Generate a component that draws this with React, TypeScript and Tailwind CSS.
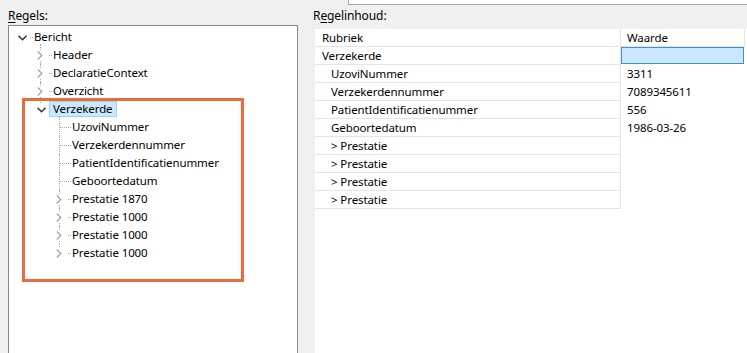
import React from "react";

type Kind = "open" | "closed" | "leaf";

interface TreeRow {
  label: string;
  level: number;
  kind: Kind;
  first?: boolean;
  last?: boolean;
  selected?: boolean;
}

const treeRows: TreeRow[] = [
  { label: "Bericht", level: 0, kind: "open", last: true },
  { label: "Header", level: 1, kind: "closed", first: true },
  { label: "DeclaratieContext", level: 1, kind: "closed" },
  { label: "Overzicht", level: 1, kind: "closed" },
  { label: "Verzekerde", level: 1, kind: "open", last: true, selected: true },
  { label: "UzoviNummer", level: 2, kind: "leaf", first: true },
  { label: "Verzekerdennummer", level: 2, kind: "leaf" },
  { label: "PatientIdentificatienummer", level: 2, kind: "leaf" },
  { label: "Geboortedatum", level: 2, kind: "leaf" },
  { label: "Prestatie 1870", level: 2, kind: "closed" },
  { label: "Prestatie 1000", level: 2, kind: "closed" },
  { label: "Prestatie 1000", level: 2, kind: "closed" },
  { label: "Prestatie 1000", level: 2, kind: "closed", last: true },
];

const indent = ["pl-[4px]", "pl-[23px]", "pl-[42px]"];

const tableRows = [
  { label: "Verzekerde", sub: false, value: "", selected: true },
  { label: "UzoviNummer", sub: true, value: "3311" },
  { label: "Verzekerdennummer", sub: true, value: "7089345611" },
  { label: "PatientIdentificatienummer", sub: true, value: "556" },
  { label: "Geboortedatum", sub: true, value: "1986-03-26" },
  { label: "> Prestatie", sub: true, value: "" },
  { label: "> Prestatie", sub: true, value: "" },
  { label: "> Prestatie", sub: true, value: "" },
  { label: "> Prestatie", sub: true, value: "" },
];

const Chevron = ({ open }: { open: boolean }) =>
  open ? (
    <svg width="9" height="6" viewBox="0 0 9 6">
      <path d="M0.5 0.8 L4.5 4.8 L8.5 0.8" fill="none" stroke="#2b2b2b" strokeWidth="1.3" />
    </svg>
  ) : (
    <svg width="6" height="9" viewBox="0 0 6 9">
      <path d="M0.8 0.5 L4.8 4.5 L0.8 8.5" fill="none" stroke="#a6a6a6" strokeWidth="1.3" />
    </svg>
  );

const Connector = ({ row }: { row: TreeRow }) => {
  const root = row.level === 0;
  return (
    <div className="relative w-[17px] h-[18px] shrink-0">
      {!root && (
        <div
          className={`absolute left-[8px] w-0 border-l border-dotted border-[#a8a8a8] ${
            row.first ? "-top-[2px]" : "top-0"
          } ${row.last ? "h-[9px]" : "bottom-0"}`}
        />
      )}
      <div className="absolute left-[9px] top-[9px] w-[11px] h-0 border-t border-dotted border-[#a8a8a8]" />
      {row.kind !== "leaf" && (
        <div className="absolute left-[1px] top-[4px] w-[15px] h-[11px] bg-white flex items-center justify-start pl-[4px]">
          <Chevron open={row.kind === "open"} />
        </div>
      )}
    </div>
  );
};

export default function App() {
  return (
    <div
      className="w-[747px] h-[353px] bg-[#f0f0f0] overflow-hidden relative text-[11.5px] tracking-[-0.1px] text-black"
      style={{ fontFamily: '"Noto Sans", "Segoe UI", sans-serif' }}
    >
      {/* partially visible input above */}
      <div className="ml-[348px] h-[5px] bg-white border-l border-b border-[#a9a9a9]" />

      <div className="flex">
        {/* left: Regels */}
        <div className="ml-[8px] w-[290px] shrink-0">
          <div className="h-[20px] pt-[3px] leading-[16px] text-[12px]">
            <span className="underline underline-offset-2">R</span>egels:
          </div>
          <div className="h-[340px] bg-white border border-[#828790] pt-[2px]">
            {treeRows.map((row, i) => (
              <div key={i} className={`h-[18px] flex items-center ${indent[row.level]}`}>
                <Connector row={row} />
                <span
                  className={`relative h-[16px] leading-[14px] px-[3px] border whitespace-nowrap ${
                    row.selected ? "bg-[#cce8ff] border-[#99d1ff]" : "border-transparent"
                  }`}
                >
                  {row.label}
                </span>
              </div>
            ))}
          </div>
        </div>

        {/* right: Regelinhoud */}
        <div className="ml-[15px] flex-1">
          <div className="h-[24px] pt-[3px] leading-[16px] text-[12px]">
            R<span className="underline underline-offset-2">e</span>gelinhoud:
          </div>
          <div className="ml-[2px] h-[340px] bg-white">
            <div className="flex h-[18px] leading-[17px]">
              <div className="w-[306px] border-r border-b border-[#e5e5e5] pl-[7px]">Rubriek</div>
              <div className="w-[124px] border-r border-b border-[#e5e5e5] pl-[6px]">Waarde</div>
            </div>
            {tableRows.map((r, i) => (
              <div key={i} className="flex h-[18px] leading-[17px]">
                <div
                  className={`w-[306px] border-r border-b border-[#e5e5e5] whitespace-nowrap ${
                    r.sub ? "pl-[16px]" : "pl-[7px]"
                  }`}
                >
                  {r.label}
                </div>
                {r.selected ? (
                  <div className="w-[123px] h-[17px] bg-[#cce8ff] border border-[#3f8fd6]" />
                ) : (
                  <div className="w-[124px] pl-[6px]">{r.value}</div>
                )}
              </div>
            ))}
          </div>
        </div>
      </div>

      {/* orange highlight annotation */}
      <div className="absolute left-[22px] top-[98px] w-[222px] h-[184px] border-[3px] border-[#eb6c36]" />
    </div>
  );
}
